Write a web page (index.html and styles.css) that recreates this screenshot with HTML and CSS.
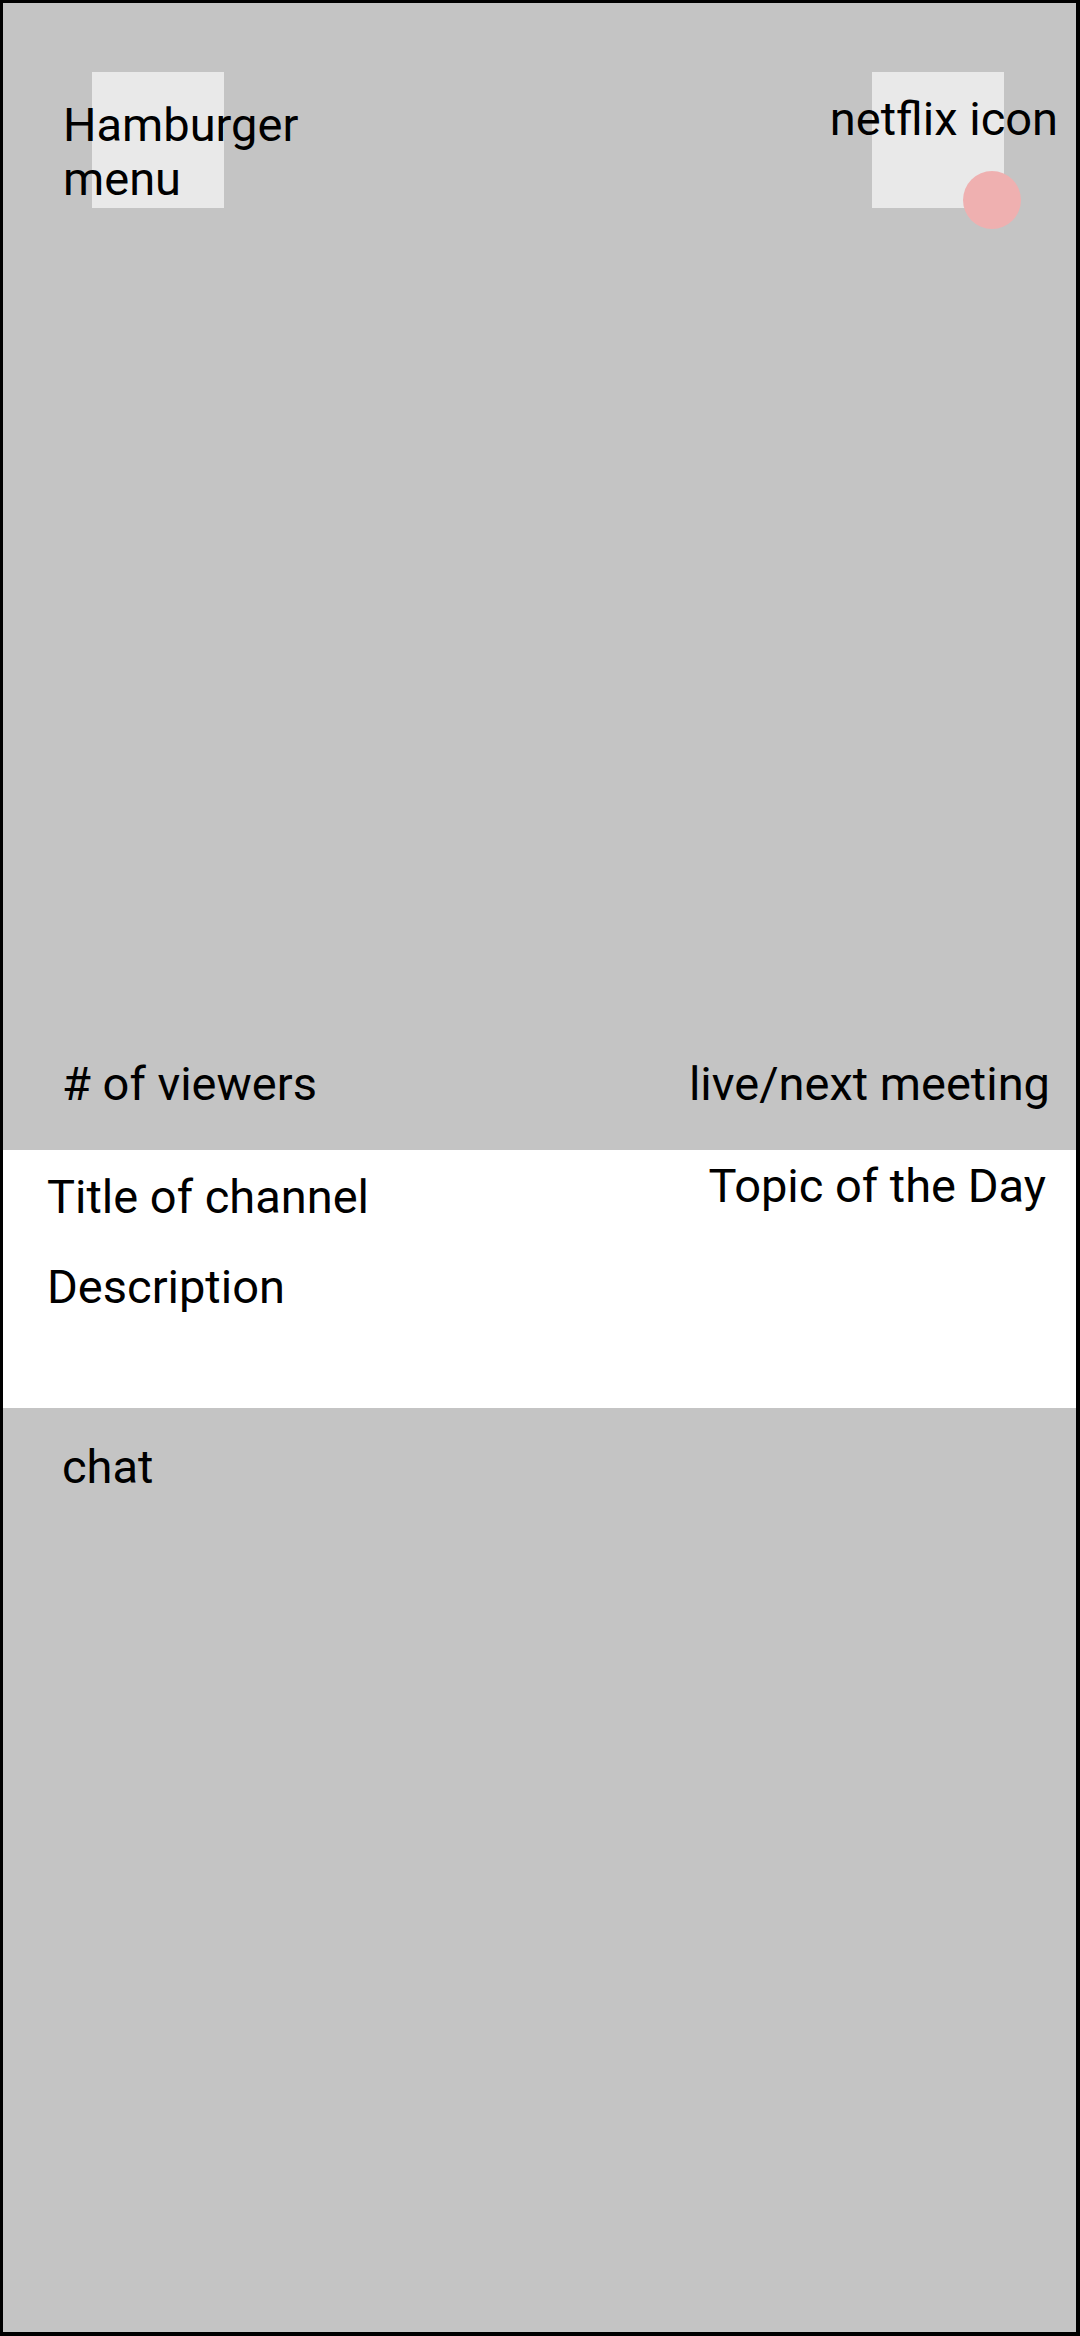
FILE: index.html
```html
<!DOCTYPE html>
<html lang="en">
<head>
<meta charset="utf-8">
<title>Channel</title>
<link rel="stylesheet" href="styles.css">
</head>
<body>
<div class="screen">
  <section class="hero">
    <header class="topbar">
      <div class="slot">
        <span class="slot-label menu-label">Hamburger menu</span>
      </div>
      <div class="slot">
        <span class="slot-label brand-label">netflix icon</span>
        <span class="badge"></span>
      </div>
    </header>
    <div class="stats">
      <span class="viewers"># of viewers</span>
      <span class="meeting">live/next meeting</span>
    </div>
  </section>
  <section class="info">
    <div class="info-main">
      <div class="channel-title">Title of channel</div>
      <div class="channel-desc">Description</div>
    </div>
    <div class="topic">Topic of the Day</div>
  </section>
  <section class="chat">
    <div class="chat-label">chat</div>
  </section>
</div>
</body>
</html>
```
FILE: styles.css
```css
* { box-sizing: border-box; }
html, body { margin: 0; padding: 0; }
body {
  font-family: Roboto, "Noto Sans", "Liberation Sans", sans-serif;
  font-size: 47px;
  line-height: 56px;
  color: #000;
  background: #000;
}
.screen {
  width: 1080px;
  height: 2336px;
  border-style: solid;
  border-color: #000;
  border-width: 3px 4px 4px 3px;
  display: flex;
  flex-direction: column;
  background: #c4c4c4;
  overflow: hidden;
}
.hero {
  height: 1147px;
  display: flex;
  flex-direction: column;
  justify-content: space-between;
  background: #c4c4c4;
}
.topbar {
  display: flex;
  justify-content: space-between;
  padding: 69px 72px 0 89px;
}
.slot {
  position: relative;
  width: 132px;
  height: 136px;
  background: #e9e9e9;
}
.slot-label {
  position: absolute;
  line-height: 54px;
  white-space: nowrap;
}
.menu-label {
  left: -29px;
  top: 26px;
  white-space: normal;
  width: 250px;
}
.brand-label {
  right: -54px;
  top: 20px;
}
.badge {
  position: absolute;
  left: 91px;
  top: 99px;
  width: 58px;
  height: 58px;
  border-radius: 50%;
  background: #efb0b0;
}
.stats {
  display: flex;
  justify-content: space-between;
  padding: 0 26px 38px 59px;
}
.info {
  height: 258px;
  background: #fff;
  display: flex;
  justify-content: space-between;
  align-items: flex-start;
  padding: 0 30px 0 44px;
}
.info-main {
  display: flex;
  flex-direction: column;
  gap: 34px;
  padding-top: 19px;
}
.topic {
  padding-top: 8px;
}
.chat {
  flex: 1;
  background: #c4c4c4;
  padding: 31px 0 0 59px;
}
```
